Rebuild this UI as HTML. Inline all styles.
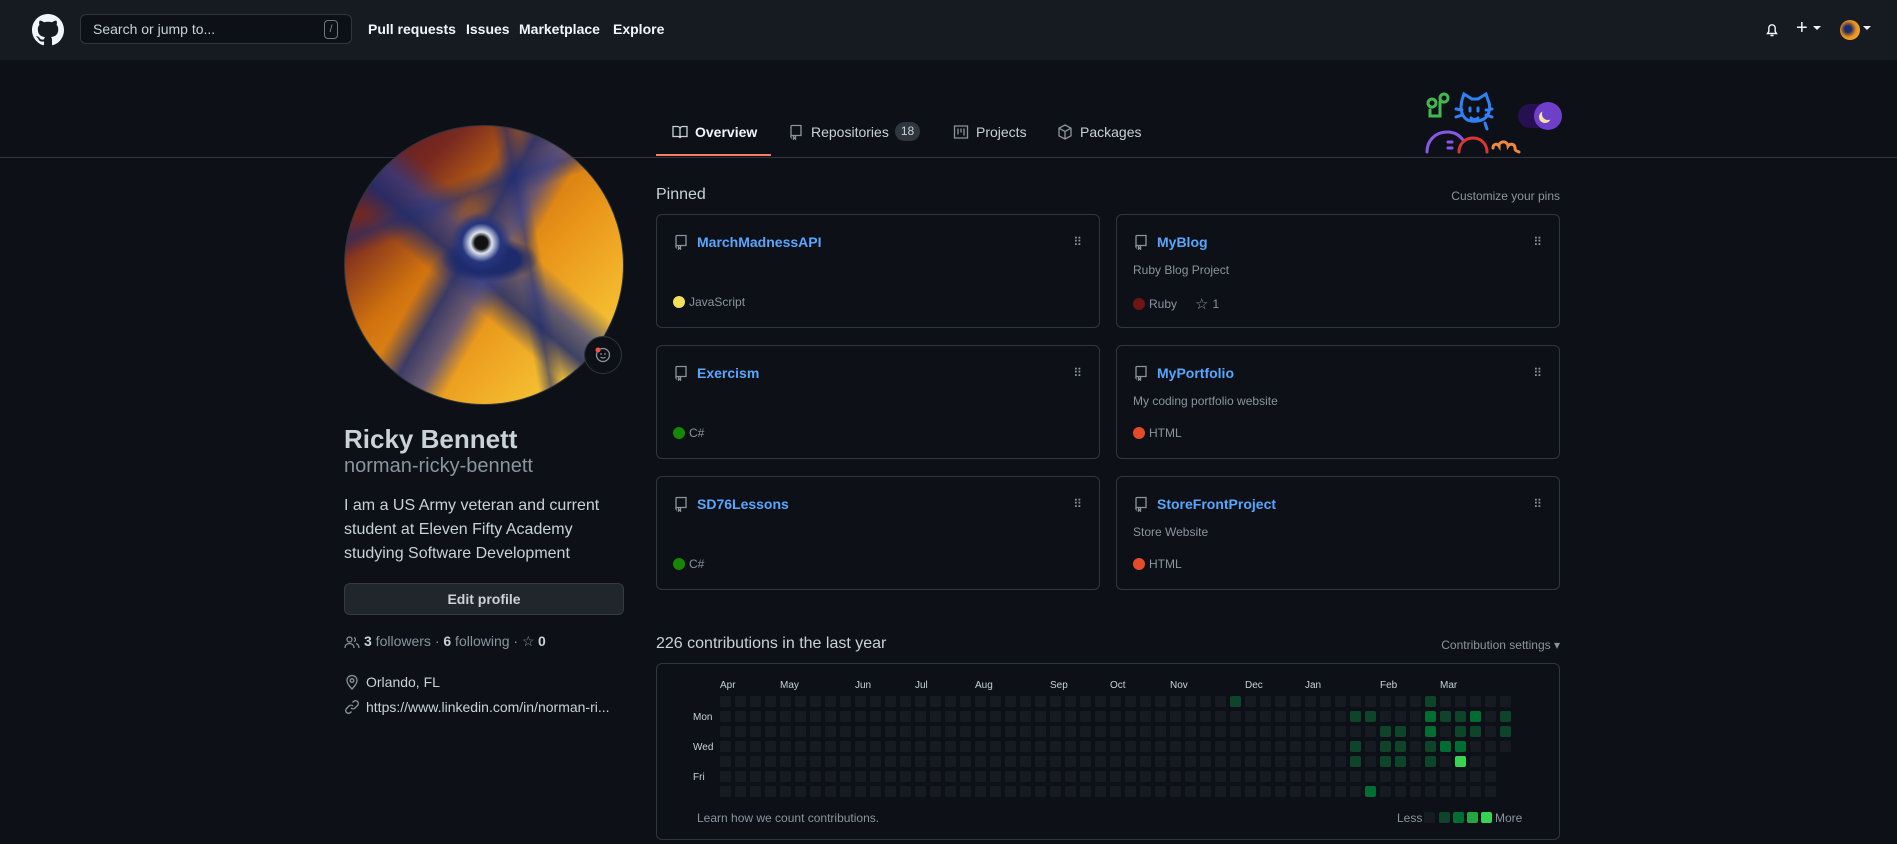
<!DOCTYPE html>
<html><head><meta charset="utf-8"><style>
*{box-sizing:border-box;margin:0;padding:0}
body{width:1897px;height:844px;overflow:hidden;background:#0d1117;font-family:"Liberation Sans",sans-serif;color:#c9d1d9;position:relative;font-size:14px}
.a{position:absolute;white-space:nowrap}
.hdr{position:absolute;left:0;top:0;width:1897px;height:60px;background:#161b22}
.nav{font-weight:bold;color:#f0f6fc;font-size:14px;top:21px}
.card{position:absolute;width:444px;height:114px;border:1px solid #30363d;border-radius:6px}
.card .t{position:absolute;left:40px;top:19px;color:#58a6ff;font-weight:bold;font-size:14px}
.card .d{position:absolute;left:16px;top:48px;color:#8b949e;font-size:12px}
.card .l{position:absolute;left:16px;top:80px;color:#8b949e;font-size:12px;display:flex;align-items:center;gap:4px}
.card .l i{display:inline-block;width:12px;height:12px;border-radius:50%}
.card svg.r{position:absolute;left:16px;top:19px}
.card .g{position:absolute;right:18px;top:20px;color:#8b949e;font-size:12px;letter-spacing:-1px}
.m{font-size:10px;color:#c9d1d9;top:680px}
</style></head><body>
<div class="hdr"></div>
<svg class="a" style="left:32px;top:14px" width="32" height="32" viewBox="0 0 16 16"><path fill="#f0f6fc" d="M8 0C3.58 0 0 3.58 0 8c0 3.540 2.29 6.53 5.47 7.59.4.07.55-.17.55-.38 0-.19-.01-.82-.01-1.49-2.01.37-2.530-.49-2.69-.94-.09-.23-.48-.94-.82-1.13-.28-.15-.68-.52-.01-.53.63-.01 1.08.58 1.23.82.72 1.21 1.87.87 2.33.66.07-.52.28-.87.51-1.07-1.78-.2-3.64-.89-3.64-3.95 0-.87.31-1.59.82-2.15-.08-.2-.36-1.02.08-2.12 0 0 .67-.21 2.2.82.64-.18 1.32-.27 2-.27.68 0 1.36.09 2 .27 1.53-1.04 2.2-.82 2.2-.82.44 1.1.16 1.92.08 2.12.51.56.82 1.27.82 2.15 0 3.07-1.87 3.75-3.65 3.95.29.25.54.73.54 1.48 0 1.07-.01 1.93-.01 2.2 0 .21.15.46.55.38A8.013 8.013 0 0016 8c0-4.42-3.58-8-8-8z"/></svg>
<div class="a" style="left:80px;top:14px;width:272px;height:30px;border:1px solid #30363d;border-radius:6px;background:#0d1117"></div>
<div class="a" style="left:93px;top:21px;color:#c9d1d9;font-size:14px">Search or jump to...</div>
<div class="a" style="left:324px;top:20px;width:14px;height:19px;border:1px solid #6e7681;border-radius:4px;color:#8b949e;font-size:10px;text-align:center;line-height:17px">/</div>
<div class="a nav" style="left:368px">Pull requests</div>
<div class="a nav" style="left:466px">Issues</div>
<div class="a nav" style="left:519px">Marketplace</div>
<div class="a nav" style="left:613px">Explore</div>
<svg class="a" style="left:1764px;top:22px" width="16" height="16" viewBox="0 0 16 16"><path fill="none" stroke="#f0f6fc" stroke-width="1.4" d="M3.5 11.5h9l-1.3-2V6a3.2 3.2 0 00-6.4 0v3.5zM6.5 13.5h3"/></svg>
<div class="a" style="left:1796px;top:17px;color:#f0f6fc;font-size:20px">+</div>
<div class="a" style="left:1813px;top:26px;border:4px solid transparent;border-top-color:#f0f6fc"></div>
<div class="a" style="left:1840px;top:20px;width:20px;height:20px;border-radius:50%;background:radial-gradient(circle at 40% 45%,#1d2a6b 20%,#e88f1a 50%,#f5c33a)"></div>
<div class="a" style="left:1863px;top:26px;border:4px solid transparent;border-top-color:#f0f6fc"></div>

<div class="a" style="left:0;top:157px;width:1897px;height:1px;background:#30363d"></div>
<svg class="a" style="left:672px;top:124px" width="16" height="16" viewBox="0 0 16 16"><path fill="none" stroke="#c9d1d9" stroke-width="1.3" d="M1 2.5h4.5A2.5 2.5 0 018 5v9a2 2 0 00-2-1.5H1zM15 2.5h-4.5A2.5 2.5 0 008 5v9a2 2 0 012-1.5h5z"/></svg>
<div class="a" style="left:695px;top:124px;color:#f0f6fc;font-weight:bold;font-size:14px">Overview</div>
<div class="a" style="left:656px;top:154px;width:115px;height:2px;background:#f78166"></div>
<svg class="a" style="left:788px;top:124px" width="16" height="16" viewBox="0 0 16 16"><path fill="none" stroke="#8b949e" stroke-width="1.3" d="M3 13V2.5A1 1 0 014 1.5h9v10H4a1 1 0 00-1 1.5zM5.5 12v3l1-1 1 1v-3"/></svg>
<div class="a" style="left:811px;top:124px;color:#c9d1d9">Repositories</div>
<div class="a" style="left:895px;top:122px;width:25px;height:19px;border-radius:10px;background:#30363d;color:#c9d1d9;font-size:12px;text-align:center;line-height:19px">18</div>
<svg class="a" style="left:953px;top:124px" width="16" height="16" viewBox="0 0 16 16"><path fill="none" stroke="#8b949e" stroke-width="1.3" d="M1.5 2h13v12h-13zM5 4.5v6M8 4.5v4M11 4.5v7"/></svg>
<div class="a" style="left:976px;top:124px;color:#c9d1d9">Projects</div>
<svg class="a" style="left:1057px;top:124px" width="16" height="16" viewBox="0 0 16 16"><path fill="none" stroke="#8b949e" stroke-width="1.3" d="M8 1l6 3.2v7.6L8 15l-6-3.2V4.2zM2 4.2L8 7.5l6-3.3M8 7.5V15"/></svg>
<div class="a" style="left:1080px;top:124px;color:#c9d1d9">Packages</div>

<svg class="a" style="left:1420px;top:90px" width="150" height="65" viewBox="0 0 150 65">
<g fill="none" stroke-width="3" stroke-linecap="round">
<path stroke="#3fb950" d="M20 8a4 4 0 110 .1M20 12v14h-10v-6M8 13a4 4 0 110 .1"/>
<path stroke="#2f81f7" d="M42 10l2-6 8 5h6l8-5 2 6c3 6 2 15-4 19-6 3-14 3-18 0-5-4-6-12-4-19zM36 19l6 1M36 27l6-2M72 19l-6 1M72 27l-6-2M50 18v3M58 18v3M51 28c2 2 5 2 7 0M65 33l2 6"/>
<path stroke="#8957e5" d="M7 62c0-12 9-20 20-20 8 0 12 3 16 8M28 52h4M28 58h4"/>
<path stroke="#da3633" d="M39 62c0-8 6-14 14-14s14 6 14 14"/>
<path stroke="#f0883e" d="M73 58c0-4 4-5 6-2 0-5 8-6 9 0 2-3 7-2 7 2s3 3 4 4"/>
</g></svg>
<div class="a" style="left:1518px;top:104px;width:40px;height:24px;border-radius:12px;background:#271052"></div>
<div class="a" style="left:1534px;top:102px;width:28px;height:28px;border-radius:50%;background:#6e40c9"></div>
<div class="a" style="left:1542px;top:108px;width:12px;height:12px;border-radius:50%;box-shadow:-3px 3px 0 0 #f8e3a1"></div>

<div class="a" style="left:344px;top:125px;width:280px;height:280px;border-radius:50%;border:1px solid #30363d;overflow:hidden;background:
radial-gradient(circle at 49% 42%,#111 3%,#dde4f0 5%,#26357e 9%,transparent 14%),
radial-gradient(ellipse 22% 10% at 52% 48%,#1d2a6b 50%,transparent 80%),
linear-gradient(120deg,transparent 38%,rgba(32,45,115,.85) 45%,rgba(60,70,150,.7) 52%,transparent 58%),
linear-gradient(40deg,transparent 40%,rgba(30,44,110,.85) 47%,rgba(45,60,140,.7) 53%,transparent 60%),
linear-gradient(80deg,transparent 60%,rgba(30,44,110,.6) 64%,transparent 68%),
linear-gradient(160deg,transparent 25%,rgba(30,44,110,.6) 30%,transparent 35%),
linear-gradient(135deg,#4a1424 0%,#7a2a20 22%,#d0720f 40%,#e9961a 60%,#f6c233 85%)"></div>
<div class="a" style="left:584px;top:336px;width:38px;height:38px;border-radius:50%;background:#0d1117;border:1px solid #30363d"></div>
<svg class="a" style="left:595px;top:347px" width="16" height="16" viewBox="0 0 16 16"><circle cx="8" cy="8" r="6.5" fill="none" stroke="#8b949e" stroke-width="1.3"/><circle cx="6" cy="7" r=".9" fill="#8b949e"/><circle cx="10" cy="7" r=".9" fill="#8b949e"/><path d="M5.5 10c1.3 1.3 3.7 1.3 5 0" fill="none" stroke="#8b949e" stroke-width="1.2"/><circle cx="3" cy="3" r="2.5" fill="#f85149"/></svg>

<div class="a" style="left:344px;top:424px;font-size:26px;font-weight:bold;color:#c9d1d9">Ricky Bennett</div>
<div class="a" style="left:344px;top:455px;font-size:20px;color:#8b949e">norman-ricky-bennett</div>
<div class="a" style="left:344px;top:494px;font-size:16px;line-height:24px;color:#c9d1d9">I am a US Army veteran and current<br>student at Eleven Fifty Academy<br>studying Software Development</div>
<div class="a" style="left:344px;top:583px;width:280px;height:32px;border:1px solid #363b42;border-radius:6px;background:#21262d;color:#c9d1d9;font-weight:bold;text-align:center;line-height:30px">Edit profile</div>
<svg class="a" style="left:344px;top:634px" width="16" height="16" viewBox="0 0 16 16"><g fill="none" stroke="#8b949e" stroke-width="1.2"><circle cx="5.5" cy="5.5" r="2.5"/><path d="M1 14c0-3 2-4.5 4.5-4.5S10 11 10 14M10 3.5a2.3 2.3 0 010 4.3M12 9.5c1.8.6 3 2 3 4.5"/></g></svg>
<div class="a" style="left:364px;top:633px;color:#8b949e"><b style="color:#c9d1d9">3</b> followers · <b style="color:#c9d1d9">6</b> following · <span style="display:inline-block;width:16px">&#9734;</span><b style="color:#c9d1d9">0</b></div>
<svg class="a" style="left:344px;top:674px" width="16" height="16" viewBox="0 0 16 16"><g fill="none" stroke="#8b949e" stroke-width="1.3"><path d="M8 15s-5-5-5-8.5a5 5 0 0110 0C13 10 8 15 8 15z"/><circle cx="8" cy="6.5" r="1.8"/></g></svg>
<div class="a" style="left:366px;top:674px;color:#c9d1d9">Orlando, FL</div>
<svg class="a" style="left:344px;top:699px" width="16" height="16" viewBox="0 0 16 16"><g fill="none" stroke="#8b949e" stroke-width="1.3"><path d="M7 9a3 3 0 004 0l2.5-2.5a2.8 2.8 0 00-4-4L8.5 3.5M9 7a3 3 0 00-4 0L2.5 9.5a2.8 2.8 0 004 4l1-1"/></g></svg>
<div class="a" style="left:366px;top:699px;color:#c9d1d9">https://www.linkedin.com/in/norman-ri...</div>

<div class="a" style="left:656px;top:186px;font-size:16px;color:#c9d1d9">Pinned</div>
<div class="a" style="left:1443px;top:189px;font-size:12px;color:#8b949e;width:117px;text-align:right">Customize your pins</div>

<div class="card" style="left:656px;top:214px"><svg class="r" width="16" height="16" viewBox="0 0 16 16"><path fill="none" stroke="#8b949e" stroke-width="1.3" d="M3 13V2.5A1 1 0 014 1.5h9v10H4a1 1 0 00-1 1.5zM5.5 12v3l1-1 1 1v-3"/></svg><div class="t">MarchMadnessAPI</div><div class="g">⠿</div><div class="l"><i style="background:#f1e05a"></i>JavaScript</div></div>
<div class="card" style="left:1116px;top:214px"><svg class="r" width="16" height="16" viewBox="0 0 16 16"><path fill="none" stroke="#8b949e" stroke-width="1.3" d="M3 13V2.5A1 1 0 014 1.5h9v10H4a1 1 0 00-1 1.5zM5.5 12v3l1-1 1 1v-3"/></svg><div class="t">MyBlog</div><div class="g">⠿</div><div class="d">Ruby Blog Project</div><div class="l"><i style="background:#701516"></i>Ruby<span style="margin-left:14px;font-size:15px">&#9734;</span> 1</div></div>
<div class="card" style="left:656px;top:345px"><svg class="r" width="16" height="16" viewBox="0 0 16 16"><path fill="none" stroke="#8b949e" stroke-width="1.3" d="M3 13V2.5A1 1 0 014 1.5h9v10H4a1 1 0 00-1 1.5zM5.5 12v3l1-1 1 1v-3"/></svg><div class="t">Exercism</div><div class="g">⠿</div><div class="l"><i style="background:#178600"></i>C#</div></div>
<div class="card" style="left:1116px;top:345px"><svg class="r" width="16" height="16" viewBox="0 0 16 16"><path fill="none" stroke="#8b949e" stroke-width="1.3" d="M3 13V2.5A1 1 0 014 1.5h9v10H4a1 1 0 00-1 1.5zM5.5 12v3l1-1 1 1v-3"/></svg><div class="t">MyPortfolio</div><div class="g">⠿</div><div class="d">My coding portfolio website</div><div class="l"><i style="background:#e34c26"></i>HTML</div></div>
<div class="card" style="left:656px;top:476px"><svg class="r" width="16" height="16" viewBox="0 0 16 16"><path fill="none" stroke="#8b949e" stroke-width="1.3" d="M3 13V2.5A1 1 0 014 1.5h9v10H4a1 1 0 00-1 1.5zM5.5 12v3l1-1 1 1v-3"/></svg><div class="t">SD76Lessons</div><div class="g">⠿</div><div class="l"><i style="background:#178600"></i>C#</div></div>
<div class="card" style="left:1116px;top:476px"><svg class="r" width="16" height="16" viewBox="0 0 16 16"><path fill="none" stroke="#8b949e" stroke-width="1.3" d="M3 13V2.5A1 1 0 014 1.5h9v10H4a1 1 0 00-1 1.5zM5.5 12v3l1-1 1 1v-3"/></svg><div class="t">StoreFrontProject</div><div class="g">⠿</div><div class="d">Store Website</div><div class="l"><i style="background:#e34c26"></i>HTML</div></div>

<div class="a" style="left:656px;top:635px;font-size:16px;color:#c9d1d9">226 contributions in the last year</div>
<div class="a" style="left:1400px;top:638px;font-size:12px;color:#8b949e;width:160px;text-align:right">Contribution settings ▾</div>
<div class="a" style="left:656px;top:663px;width:904px;height:177px;border:1px solid #30363d;border-radius:6px"></div>
<div class="a m" style="left:720px">Apr</div><div class="a m" style="left:780px">May</div><div class="a m" style="left:855px">Jun</div><div class="a m" style="left:915px">Jul</div><div class="a m" style="left:975px">Aug</div><div class="a m" style="left:1050px">Sep</div><div class="a m" style="left:1110px">Oct</div><div class="a m" style="left:1170px">Nov</div><div class="a m" style="left:1245px">Dec</div><div class="a m" style="left:1305px">Jan</div><div class="a m" style="left:1380px">Feb</div><div class="a m" style="left:1440px">Mar</div>
<div class="a" style="left:693px;top:712px;font-size:10px">Mon</div>
<div class="a" style="left:693px;top:742px;font-size:10px">Wed</div>
<div class="a" style="left:693px;top:772px;font-size:10px">Fri</div>
<svg class="a" style="left:720px;top:696px" width="800" height="106">
<defs><pattern id="p" width="15" height="15" patternUnits="userSpaceOnUse"><rect width="11" height="11" rx="2" fill="#161b22"/></pattern></defs>
<rect width="795" height="105" fill="url(#p)"/>
<rect x="780" y="60" width="15" height="45" fill="#0d1117"/>
<g fill="#0e4429">
<rect x="510" y="0" width="11" height="11" rx="2"/>
<rect x="630" y="15" width="11" height="11" rx="2"/><rect x="645" y="15" width="11" height="11" rx="2"/><rect x="720" y="15" width="11" height="11" rx="2"/><rect x="735" y="15" width="11" height="11" rx="2"/><rect x="780" y="15" width="11" height="11" rx="2"/>
<rect x="660" y="30" width="11" height="11" rx="2"/><rect x="735" y="30" width="11" height="11" rx="2"/><rect x="750" y="30" width="11" height="11" rx="2"/><rect x="780" y="30" width="11" height="11" rx="2"/>
<rect x="630" y="45" width="11" height="11" rx="2"/><rect x="660" y="45" width="11" height="11" rx="2"/><rect x="675" y="45" width="11" height="11" rx="2"/><rect x="705" y="45" width="11" height="11" rx="2"/>
<rect x="630" y="60" width="11" height="11" rx="2"/><rect x="660" y="60" width="11" height="11" rx="2"/><rect x="675" y="60" width="11" height="11" rx="2"/><rect x="705" y="60" width="11" height="11" rx="2"/>
<rect x="675" y="30" width="11" height="11" rx="2"/><rect x="705" y="0" width="11" height="11" rx="2"/>
</g>
<g fill="#006d32">
<rect x="705" y="15" width="11" height="11" rx="2"/><rect x="705" y="30" width="11" height="11" rx="2"/><rect x="750" y="15" width="11" height="11" rx="2"/><rect x="720" y="45" width="11" height="11" rx="2"/><rect x="735" y="45" width="11" height="11" rx="2"/><rect x="645" y="90" width="11" height="11" rx="2"/>
</g>
<rect x="735" y="60" width="11" height="11" rx="2" fill="#39d353"/>
</svg>
<div class="a" style="left:697px;top:811px;font-size:12px;color:#8b949e">Learn how we count contributions.</div>
<div class="a" style="left:1397px;top:811px;font-size:12px;color:#8b949e">Less</div>
<div class="a" style="left:1424px;top:812px;width:11px;height:11px;border-radius:2px;background:#161b22"></div>
<div class="a" style="left:1439px;top:812px;width:11px;height:11px;border-radius:2px;background:#0e4429"></div>
<div class="a" style="left:1453px;top:812px;width:11px;height:11px;border-radius:2px;background:#006d32"></div>
<div class="a" style="left:1467px;top:812px;width:11px;height:11px;border-radius:2px;background:#26a641"></div>
<div class="a" style="left:1481px;top:812px;width:11px;height:11px;border-radius:2px;background:#39d353"></div>
<div class="a" style="left:1495px;top:811px;font-size:12px;color:#8b949e">More</div>
</body></html>
